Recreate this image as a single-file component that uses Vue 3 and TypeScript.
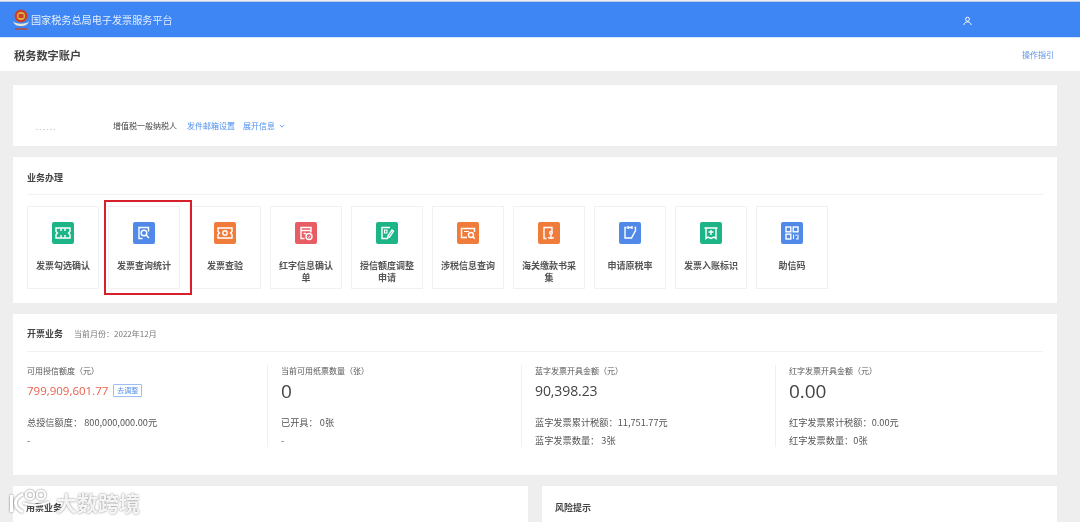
<script setup lang="ts">
interface Tile { label: string; color: string; icon: string; selected?: boolean }
interface Stat { title: string; value: string; lines: string[]; red?: boolean; tag?: string; big?: boolean }

const tiles: Tile[] = [
  { label: '发票勾选确认', color: '#1db587', icon: 'ticket' },
  { label: '发票查询统计', color: '#5089e8', icon: 'search', selected: true },
  { label: '发票查验', color: '#f07c3c', icon: 'verify' },
  { label: '红字信息确认单', color: '#e85d63', icon: 'redcheck' },
  { label: '授信额度调整申请', color: '#1db587', icon: 'edit' },
  { label: '涉税信息查询', color: '#f07c3c', icon: 'folder' },
  { label: '海关缴款书采集', color: '#f07c3c', icon: 'customs' },
  { label: '申请原税率', color: '#5089e8', icon: 'note' },
  { label: '发票入账标识', color: '#1db587', icon: 'book' },
  { label: '助信码', color: '#5089e8', icon: 'qr' },
]

const stats: Stat[] = [
  { title: '可用授信额度（元）', value: '799,909,601.77', red: true, tag: '去调整', lines: ['总授信额度： 800,000,000.00元', '-'] },
  { title: '当前可用纸票数量（张）', value: '0', big: true, lines: ['已开具： 0张', '-'] },
  { title: '蓝字发票开具金额（元）', value: '90,398.23', lines: ['蓝字发票累计税额：11,751.77元', '蓝字发票数量： 3张'] },
  { title: '红字发票开具金额（元）', value: '0.00', big: true, lines: ['红字发票累计税额：0.00元', '红字发票数量：0张'] },
]
</script>

<template>
  <div class="page">
    <header class="topbar">
      <div class="brand">
        <svg class="emblem" viewBox="0 0 18 24" width="18" height="24" aria-hidden="true">
          <path d="M1 13c2 3.500 14 3.500 16 0-1 4-4 5-8 5s-7-1-8-5z" fill="#e9e4d8" />
          <circle cx="9" cy="8" r="6.500" fill="#c9402c" />
          <circle cx="9" cy="8" r="4" fill="#e2b33f" />
          <rect x="6.500" y="6" width="5" height="4" fill="#c9402c" />
          <rect x="3" y="20" width="12" height="2" fill="#c9402c" opacity=".7" />
        </svg>
        <span>国家税务总局电子发票服务平台</span>
      </div>
      <svg class="user" viewBox="0 0 12 12" width="9" height="10" aria-hidden="true">
        <circle cx="6" cy="3.600" r="2.600" fill="none" stroke="#fff" stroke-width="1.300" />
        <path d="M1.200 11.300c.4-3 2.300-4 4.800-4s4.400 1 4.800 4" fill="none" stroke="#fff" stroke-width="1.300" />
      </svg>
    </header>

    <div class="titlebar">
      <h1>税务数字账户</h1>
      <a class="guide">操作指引</a>
    </div>

    <main class="content">
      <section class="card account">
        <span class="masked">- - - - - -</span>
        <span class="taxpayer">增值税一般纳税人</span>
        <a class="link">发件邮箱设置</a>
        <a class="link expand">
          展开信息
          <svg viewBox="0 0 8 5" width="6" height="4" aria-hidden="true">
            <path d="M1 1l3 3 3-3" fill="none" stroke="#3f86f5" stroke-width="1" />
          </svg>
        </a>
      </section>

      <section class="card business">
        <div class="section-head biz-head"><h2>业务办理</h2></div>
        <div class="tiles">
          <div v-for="t in tiles" :key="t.label" class="tile">
            <div v-if="t.selected" class="highlight"></div>
            <span class="tile-icon" :style="{ background: t.color }">
              <svg viewBox="0 0 22 22" width="22" height="22" fill="none" stroke="#fff" stroke-width="1.400" aria-hidden="true">
                <template v-if="t.icon === 'ticket'">
                  <path d="M4 6h14v3.500l-1.500 1.500 1.500 1.500V16H4v-3.500L5.500 11 4 9.500z" />
                  <path d="M9 6.500v2.500M9 13v2.500M13 6.500v2.500M13 13v2.500" />
                </template>
                <template v-else-if="t.icon === 'search'">
                  <path d="M15.500 9.500V5.500h-9.500v11h3.500" />
                  <circle cx="11" cy="11" r="2.800" />
                  <path d="M13 13l3 3" />
                </template>
                <template v-else-if="t.icon === 'verify'">
                  <path d="M4 6h14v3.500l-1.500 1.500 1.500 1.500V16H4v-3.500L5.500 11 4 9.500z" />
                  <circle cx="11" cy="11" r="2.200" />
                </template>
                <template v-else-if="t.icon === 'redcheck'">
                  <path d="M9.500 16.500H6v-11h10v5" />
                  <path d="M6 8.500h10M8.500 11.500h2.500" />
                  <circle cx="14" cy="14.500" r="3" />
                  <path d="M12.800 14.500l1 1 1.500-1.700" stroke-width="1" />
                </template>
                <template v-else-if="t.icon === 'edit'">
                  <path d="M14 5.500H6v11h6" />
                  <path d="M8.500 8h2.500v3H8.500z" stroke-width="1.100" />
                  <path d="M16 8l1.500 1.200-4 6-1.800.5.200-1.800z" />
                </template>
                <template v-else-if="t.icon === 'folder'">
                  <path d="M10 15.500H4.500v-9h13v3.500" />
                  <path d="M7 9.500h5" stroke-width="1" />
                  <circle cx="14" cy="13" r="2.500" />
                  <path d="M15.800 14.800l2 2" />
                </template>
                <template v-else-if="t.icon === 'customs'">
                  <path d="M8.500 16.500H6v-11h8v4" />
                  <circle cx="13" cy="10.800" r="1.300" />
                  <path d="M13 12.200v4.800M10.500 15c.5 1.800 4.500 1.800 5 0" />
                </template>
                <template v-else-if="t.icon === 'note'">
                  <path d="M9 5.500h4M9 4v3M13 4v3" />
                  <path d="M15.500 5.500h1v3l-4 7.500H6V5.500h1.500" />
                </template>
                <template v-else-if="t.icon === 'book'">
                  <path d="M4.500 6h13M6 6v10.500l2-1.500 3 1.500 3-1.500 2 1.500V6" />
                  <path d="M8.500 10h5M11 8v5" />
                </template>
                <template v-else>
                  <rect x="5" y="5" width="4.800" height="4.800" />
                  <rect x="12.200" y="5" width="4.800" height="4.800" />
                  <rect x="5" y="12.200" width="4.800" height="4.800" />
                  <path d="M12.500 12.500v4.500M15 12.500v1.500M17 12.500v4.500h-2" stroke-width="1.100" />
                </template>
              </svg>
            </span>
            <span class="tile-label">{{ t.label }}</span>
          </div>
        </div>
      </section>

      <section class="card invoicing">
        <div class="section-head inv-head">
          <h2>开票业务</h2>
          <span class="month">当前月份：2022年12月</span>
        </div>
        <div class="stats">
          <div v-for="s in stats" :key="s.title" class="stat">
            <div class="stat-title">{{ s.title }}</div>
            <div class="stat-value-row">
              <span class="stat-value" :class="{ red: s.red, big: s.big }">{{ s.value }}</span>
              <span v-if="s.tag" class="tag">{{ s.tag }}</span>
            </div>
            <div class="stat-line">{{ s.lines[0] }}</div>
            <div class="stat-line second">{{ s.lines[1] }}</div>
          </div>
        </div>
      </section>

      <div class="bottom">
        <section class="card half"><h2>用票业务</h2></section>
        <section class="card half"><h2>风险提示</h2></section>
      </div>
    </main>

    <div class="watermark">
      <svg viewBox="0 0 42 26" width="42" height="26" aria-hidden="true">
        <path d="M2.500 6v17M14 5C8 8 6 12 6.500 15c.5 3 3 6 7.500 8" fill="none" stroke="#fff" stroke-width="3" />
        <circle cx="21" cy="6" r="4.200" fill="none" stroke="#fff" stroke-width="2" />
        <circle cx="32" cy="6" r="4.200" fill="none" stroke="#fff" stroke-width="2" />
        <path d="M14 14c7 3 18 3 26-1" fill="none" stroke="#fff" stroke-width="2" />
      </svg>
      <span>大数跨境</span>
    </div>
  </div>
</template>

<style>
html, body { margin: 0; overflow: hidden; background: #eeeeee; }
</style>

<style scoped>
.page {
  position: relative;
  width: 1080px;
  height: 522px;
  overflow: hidden;
  background: #eeeeee;
  color: #333;
  font-family: "Noto Sans CJK SC", "Liberation Sans", sans-serif;
  filter: blur(0.4px);
}
.topbar {
  height: 35px;
  margin-top: 1px;
  background: #3f86f5;
  border-top: 1px solid #b9cdea;
  display: flex;
  align-items: center;
  justify-content: space-between;
  padding: 0 108px 0 12px;
  color: #fff;
}
.brand { display: flex; align-items: center; gap: 1px; font-size: 10.150px; color: #e3eeff; }
.emblem { display: block; }
.user { margin-top: 3px; }
.titlebar {
  height: 33px;
  background: #fff;
  border-top: 1px solid #d8e6fb;
  display: flex;
  align-items: center;
  justify-content: space-between;
  padding: 0 26px 0 14px;
}
h1 { margin: 0; font-size: 11.200px; font-weight: 700; color: #444; }
.guide { font-size: 8px; color: #5b93e8; }
.content {
  padding: 14px 23px 0 13px;
  display: flex;
  flex-direction: column;
  gap: 11px;
}
.card { background: #fff; box-sizing: border-box; }
.account {
  height: 61px;
  padding: 0 0 14px 23px;
  display: flex;
  align-items: flex-end;
  font-size: 8px;
  line-height: 12px;
}
.masked { width: 77px; color: #999; font-size: 6px; margin-bottom: -3px; }
.taxpayer { color: #444; margin-right: 10px; }
.link { color: #4f8fee; margin-right: 8px; }
.expand { display: inline-flex; align-items: center; gap: 4px; }
.business {
  height: 146px;
  padding: 0 14px;
}
.section-head {
  height: 37px;
  border-bottom: 1px solid #f2f2f2;
  display: flex;
  align-items: center;
}
.biz-head { padding-top: 3px; box-sizing: border-box; height: 38px; }
h2 { margin: 0; font-size: 9px; font-weight: 700; color: #444; }
.tiles { display: flex; gap: 9px; margin-top: 11px; }
.tile {
  position: relative;
  width: 72px;
  height: 83px;
  box-sizing: border-box;
  border: 1px solid #f1f1f1;
  display: flex;
  flex-direction: column;
  align-items: center;
  padding: 15px 8px 0;
}
.highlight {
  position: absolute;
  z-index: 1;
  left: -5px;
  top: -7px;
  width: 88px;
  height: 95px;
  box-sizing: border-box;
  border: 2.500px solid #d7202c;
}
.tile-icon {
  width: 22px;
  height: 22px;
  border-radius: 2px;
  display: block;
  flex: none;
}
.tile-icon svg { display: block; }
.tile-label {
  margin-top: 16px;
  font-size: 9px;
  line-height: 12px;
  font-weight: 700;
  color: #555;
  text-align: center;
}
.invoicing { height: 161px; padding: 0 14px; }
.inv-head { height: 38px; gap: 11px; padding-top: 2px; box-sizing: border-box; }
.month { font-size: 8px; color: #777; }
.stats { display: grid; grid-template-columns: 240px 254px 254px 1fr; margin-top: 13px; }
.stat {
  height: 82px;
  overflow: hidden;
  border-left: 1px solid #f0f0f0;
  padding-left: 13px;
  box-sizing: border-box;
}
.stat:first-child { border-left: 0; padding-left: 0; }
.stat-title { font-size: 8px; line-height: 12px; color: #555; }
.stat-value-row { height: 25px; display: flex; align-items: center; gap: 5px; margin-top: 1px; }
.stat-value { font-size: 14px; font-family: "Open Sans", "Liberation Sans", sans-serif; color: #444; letter-spacing: -0.100px; }
.stat-value.red { font-size: 11.500px; color: #e8604c; letter-spacing: 0; }
.stat-value.big { font-size: 19px; }
.tag {
  font-size: 7px;
  line-height: 11px;
  padding: 0 3px;
  border: 1px solid #9cbff2;
  border-radius: 1px;
  color: #4f8fee;
}
.stat-line { margin-top: 13px; font-size: 9.200px; line-height: 12px; color: #555; }
.stat-line.second { margin-top: 6px; }
.bottom { display: grid; grid-template-columns: 515px 515px; gap: 14px; }
.half { height: 60px; padding: 15px 13px; }
.half h2 { line-height: 13px; }
.watermark {
  position: absolute;
  left: 9px;
  top: 489px;
  display: flex;
  align-items: center;
  gap: 5px;
  color: rgba(255,255,255,.9);
  font-size: 21px;
  line-height: 26px;
  font-weight: 700;
  text-shadow: 0 0 2px rgba(90,90,90,.8);
}
.watermark svg { filter: drop-shadow(0 0 1px rgba(90,90,90,.8)); }
</style>
